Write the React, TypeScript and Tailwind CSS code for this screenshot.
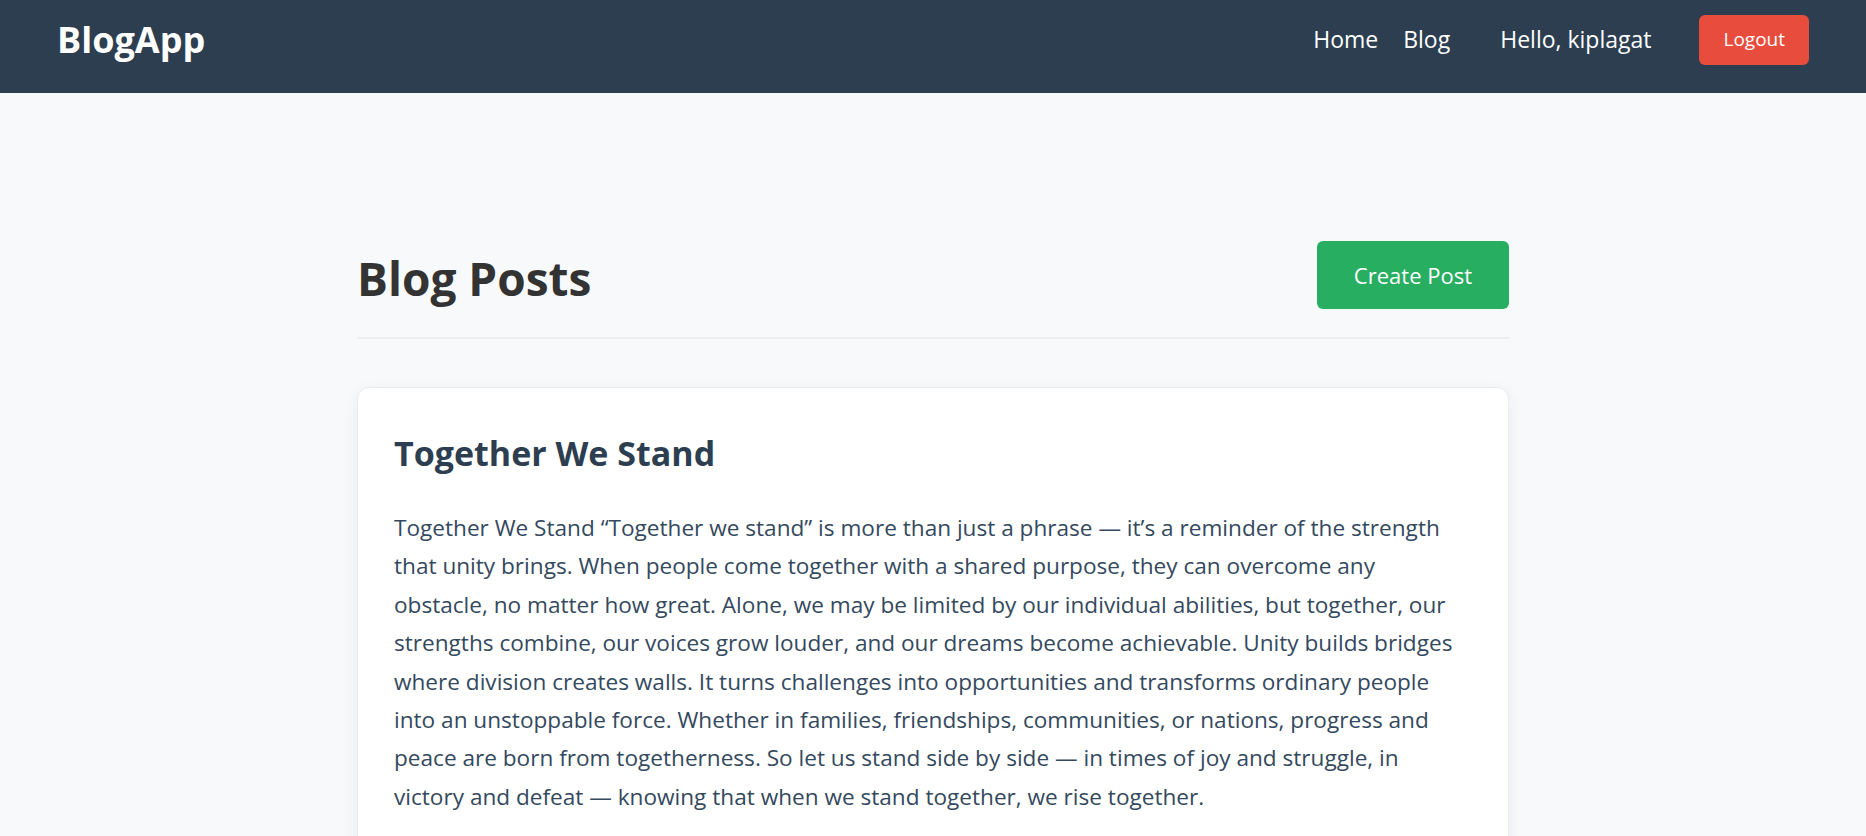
const post = {
  title: "Together We Stand",
  // lines kept as they wrap in the original layout
  lines: [
    "Together We Stand “Together we stand” is more than just a phrase — it’s a reminder of the strength",
    "that unity brings. When people come together with a shared purpose, they can overcome any",
    "obstacle, no matter how great. Alone, we may be limited by our individual abilities, but together, our",
    "strengths combine, our voices grow louder, and our dreams become achievable. Unity builds bridges",
    "where division creates walls. It turns challenges into opportunities and transforms ordinary people",
    "into an unstoppable force. Whether in families, friendships, communities, or nations, progress and",
    "peace are born from togetherness. So let us stand side by side — in times of joy and struggle, in",
    "victory and defeat — knowing that when we stand together, we rise together.",
  ],
};

function Navbar() {
  return (
    <nav className="flex h-[93px] items-center justify-between bg-[#2c3e50] px-[57px] pb-[14px] text-white">
      <a className="text-[36px] font-bold leading-none" href="#">
        BlogApp
      </a>
      <div className="flex items-center text-[23px]">
        <a href="#">Home</a>
        <a className="ml-[25px]" href="#">
          Blog
        </a>
        <span className="ml-[50px]">Hello, kiplagat</span>
        <button className="ml-[48px] h-[50px] rounded-[6px] bg-[#e74c3c] px-[24px] text-[19px] text-white">
          Logout
        </button>
      </div>
    </nav>
  );
}

export default function App() {
  return (
    <div className="min-h-screen bg-[#f8f9fa] font-['Open_Sans',sans-serif]">
      <Navbar />
      <main className="mx-auto max-w-[1152px] pt-[148px]">
        <div className="flex items-center justify-between border-b-2 border-[#eee] pb-[28px]">
          <h1 className="pt-[8px] text-[46px] leading-[1.2] font-bold text-[#333]">Blog Posts</h1>
          <button className="h-[68px] rounded-[6px] bg-[#27ae60] px-[37px] text-[22px] text-white">
            Create Post
          </button>
        </div>

        <article className="mt-[48px] rounded-[12px] border border-[#e9ecef] bg-white px-[36px] pt-[41px] pb-[40px] shadow-[0_4px_16px_rgba(0,0,0,0.06)]">
          <h2 className="mb-[32px] text-[34px] leading-[48px] font-bold text-[#2c3e50]">{post.title}</h2>
          <p className="text-[22.6px] leading-[38.4px] text-[#34495e]">
            {post.lines.map((line) => (
              <span className="block whitespace-nowrap" key={line}>
                {line}
              </span>
            ))}
          </p>
        </article>
      </main>
    </div>
  );
}
